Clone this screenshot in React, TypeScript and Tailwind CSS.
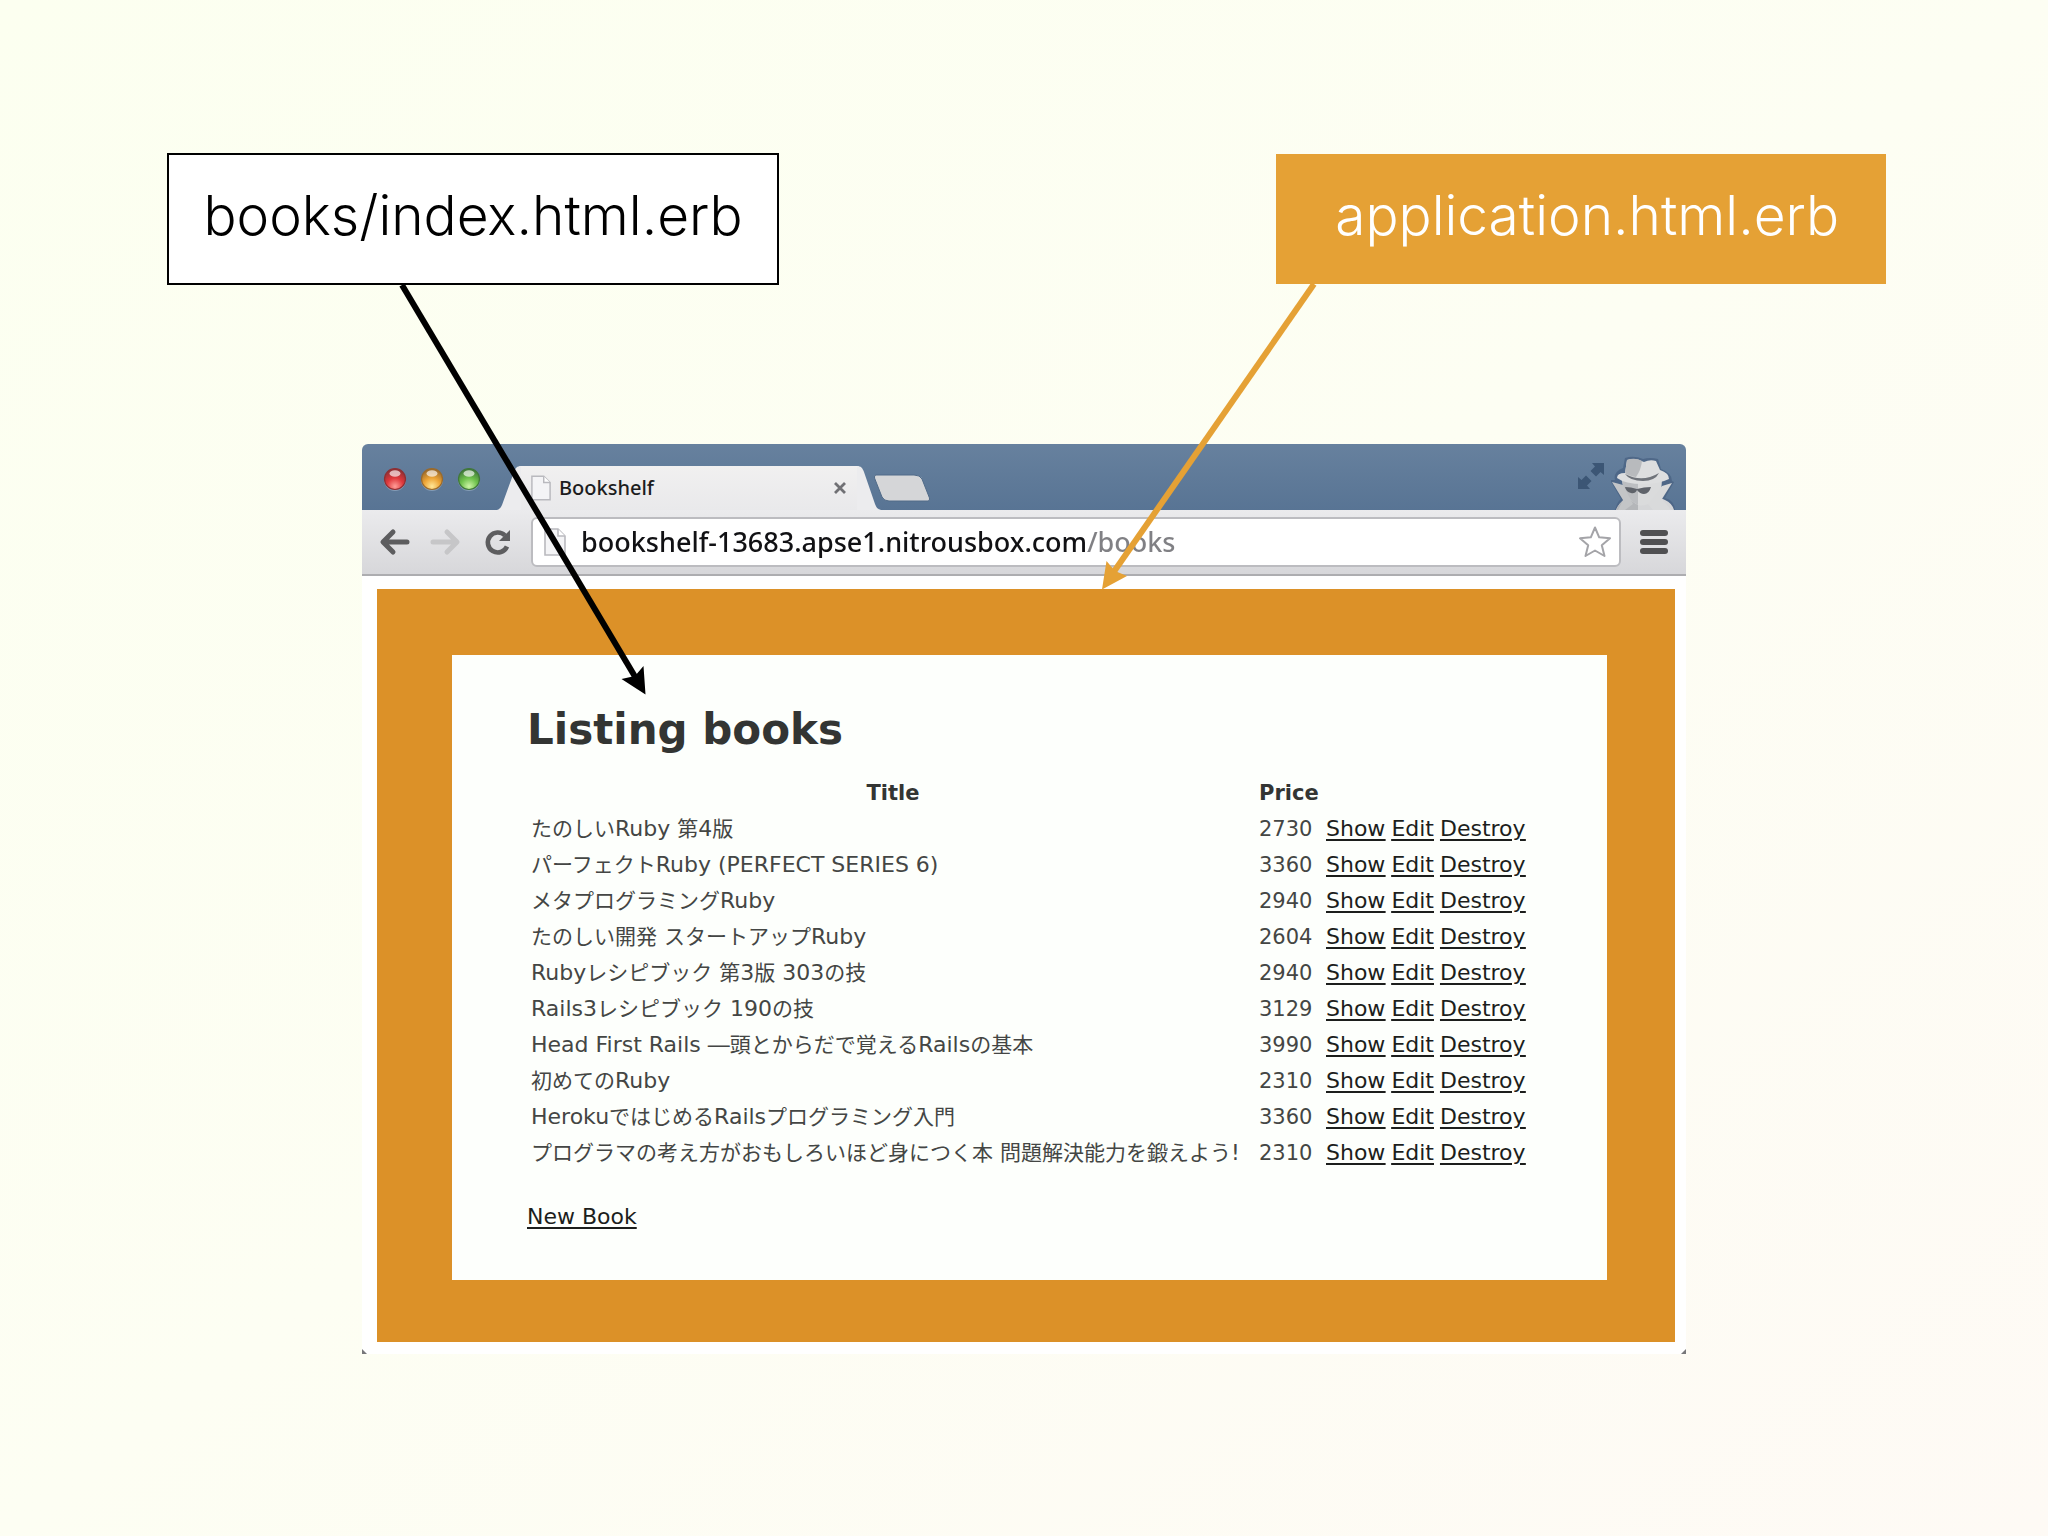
import React from 'react';

type Book = { title: string; price: number };

const books: Book[] = [
  { title: 'たのしいRuby 第4版', price: 2730 },
  { title: 'パーフェクトRuby (PERFECT SERIES 6)', price: 3360 },
  { title: 'メタプログラミングRuby', price: 2940 },
  { title: 'たのしい開発 スタートアップRuby', price: 2604 },
  { title: 'Rubyレシピブック 第3版 303の技', price: 2940 },
  { title: 'Rails3レシピブック 190の技', price: 3129 },
  { title: 'Head First Rails ―頭とからだで覚えるRailsの基本', price: 3990 },
  { title: '初めてのRuby', price: 2310 },
  { title: 'HerokuではじめるRailsプログラミング入門', price: 3360 },
  { title: 'プログラマの考え方がおもしろいほど身につく本 問題解決能力を鍛えよう!', price: 2310 },
];

function PageIcon({ className }: { className: string }) {
  return (
    <svg viewBox="0 0 22 28" className={className} aria-hidden="true">
      <path d="M1 1H14L21 8V27H1Z" fill="#f4f4f6" stroke="#b9b9be" strokeWidth="1.6" />
      <path d="M14 1V8H21" fill="#fff" stroke="#b9b9be" strokeWidth="1.6" />
    </svg>
  );
}

function Light({ label, id, edge, base, glow }: { label: string; id: string; edge: string; base: string; glow: string }) {
  return (
    <button aria-label={label} className="size-6">
      <svg viewBox="0 0 24 24" className="size-6">
        <defs>
          <radialGradient id={id} cx="50%" cy="85%" r="80%">
            <stop offset="0" stopColor={glow} />
            <stop offset="0.5" stopColor={base} />
            <stop offset="1" stopColor={edge} />
          </radialGradient>
        </defs>
        <circle cx="12" cy="13" r="11" fill="#9fb4cb" opacity="0.6" />
        <circle cx="12" cy="12" r="10.5" fill={`url(#${id})`} stroke={edge} strokeWidth="1.2" />
        <ellipse cx="12" cy="6.5" rx="5.5" ry="3.2" fill="#fff" opacity="0.65" />
      </svg>
    </button>
  );
}

function Incognito() {
  return (
    <svg viewBox="0 0 66 54" className="mr-[9px] ml-[6px] h-[54px] w-[66px]" aria-label="Incognito" role="img">
      <path
        d="M12 12L14 2Q23 -1 32 3Q39 1 47 3L50 13Q61 17 61 25L63 26L54 42Q63 44 64 54H4Q6 46 10 43L-1 24L4 24Q2 16 12 12Z"
        fill="#4a6383"
        opacity="0.8"
      />
      <path d="M5 54Q8 47 13 44Q20 40 30 40Q44 39 54 44Q61 47 63 54Z" fill="#d5d6d8" />
      <path d="M5 54Q8 47 13 44Q19 41 27 40V54Z" fill="#b4b6b9" />
      <path d="M11 24H51Q51 38 42 45Q34 51 27 49Q13 42 11 24Z" fill="#dadbdc" />
      <path d="M11 24H27V49Q13 42 11 24Z" fill="#bcbec1" />
      <path d="M14 17L16 4Q24 1 33 6Q39 3 45 5L49 14Q58 17 58 23Q48 28 32 28Q14 28 6 22Q6 17 14 17Z" fill="#dddedf" />
      <path d="M14 17L16 4Q24 1 31 5Q30 14 25 21Q18 20 14 17Z" fill="#b8babd" />
      <path d="M14 18Q31 27 48 17Q44 25 32 25Q19 25 14 18Z" fill="#6f737a" />
      <path d="M14 31Q20 31 26 33Q33 31 40 31Q38 38 33 38Q29 38 26 34Q24 38 20 37Q15 36 14 31Z" fill="#5f636a" />
      <path d="M1 26L12 29L22 48L14 54H7L12 44Z" fill="#c3c5c7" />
      <path d="M61 27L51 30L37 48L42 54H60L51 43Z" fill="#d9dadb" />
    </svg>
  );
}

function TitleBar() {
  return (
    <div className="flex h-[66px] items-end rounded-t-md bg-linear-to-b from-[#67819e] to-[#587494]">
      <div className="mb-[19px] ml-[21px] flex gap-[13px]">
        <Light label="Close window" id="red" edge="#8e2f33" base="#e0383c" glow="#ff9d97" />
        <Light label="Minimize window" id="amber" edge="#9a6a2c" base="#eda435" glow="#ffe697" />
        <Light label="Zoom window" id="green" edge="#40783a" base="#6fc24c" glow="#cdf5a6" />
      </div>
      <div className="ml-[16px] flex h-[44px]">
        <svg viewBox="0 0 24 44" className="h-[44px] w-6" aria-hidden="true">
          <path d="M0 44C3 43 4 41 5 39L17 6C18.500 2 20 0 24 0V44Z" fill="#ececee" />
        </svg>
        <div className="flex w-[336px] items-center bg-linear-to-b from-[#f1f0f0] to-[#e9e9eb] pl-[10px] pr-[11px]">
          <PageIcon className="h-[26px] w-5" />
          <span className="ml-[8px] flex-1 font-['Noto_Sans',sans-serif] text-[20px] leading-6 font-medium text-[#1c1c20]">
            Bookshelf
          </span>
          <button aria-label="Close tab" className="size-3">
            <svg viewBox="0 0 12 12" className="size-3">
              <path d="M1 1L11 11M11 1L1 11" stroke="#707074" strokeWidth="2.800" />
            </svg>
          </button>
        </div>
        <svg viewBox="0 0 24 44" className="h-[44px] w-6" aria-hidden="true">
          <path d="M0 0C4 0 5.500 2 7 6L18 38C19.500 42 21 43 24 44H0Z" fill="#ececee" />
        </svg>
      </div>
      <button aria-label="New tab" className="mb-[8px] -ml-[8px] h-7 w-[58px]">
        <svg viewBox="0 0 58 28" className="h-7 w-[58px]">
          <path
            d="M3 1H41Q47 1 49 5L56.500 24Q57 27 55 27H16Q11 27 9 23L1.500 4Q1 1 3 1Z"
            fill="#d5d6d8"
            stroke="#516b88"
            strokeWidth="1"
          />
        </svg>
      </button>
      <div className="flex-1" />
      <button aria-label="Full screen" className="mb-[20px] size-7">
        <svg viewBox="0 0 28 28" className="size-7" fill="#3c5675">
          <path d="M15 1H27V13L23.500 10L19 14.500L13.500 9L18 4.500Z" />
          <path d="M1 15L4.500 18L9 13.500L14.500 19L10 23.500L13 27H1Z" />
        </svg>
      </button>
      <Incognito />
    </div>
  );
}

function Toolbar() {
  return (
    <div className="flex h-[66px] items-center border-b-2 border-[#adadb0] bg-linear-to-b from-[#ebebed] to-[#d7d7da] pr-[18px] pl-[17px]">
      <button aria-label="Back" className="size-8">
        <svg viewBox="0 0 32 32" className="size-8" fill="none" stroke="#5d5d5f" strokeWidth="5" strokeLinecap="round">
          <path d="M5 16H28M14 6L4 16L14 26" strokeLinejoin="round" />
        </svg>
      </button>
      <button aria-label="Forward" className="ml-[18px] size-8">
        <svg viewBox="0 0 32 32" className="size-8" fill="none" stroke="#c6c6c8" strokeWidth="5" strokeLinecap="round">
          <path d="M4 16H27M18 6L28 16L18 26" strokeLinejoin="round" />
        </svg>
      </button>
      <button aria-label="Reload" className="ml-[21px] size-8">
        <svg viewBox="0 0 32 32" className="size-8">
          <path d="M23 9.500A10 10 0 1 0 25 20.500" fill="none" stroke="#5d5d5f" strokeWidth="4.600" />
          <path d="M28 4V15H17Z" fill="#5d5d5f" />
        </svg>
      </button>
      <form className="ml-[17px] flex h-[50px] flex-1 items-center rounded-md border-2 border-[#bcbcc0] bg-white pr-[7px] pl-[11px]">
        <PageIcon className="h-7 w-[22px]" />
        <input
          aria-label="Address"
          defaultValue="bookshelf-13683.apse1.nitrousbox.com/books"
          className="ml-[15px] min-w-0 flex-1 bg-[linear-gradient(90deg,#111114_507px,#808084_507px)] bg-clip-text font-['Noto_Sans',sans-serif] text-[27px] leading-8 font-medium text-transparent outline-none"
        />
        <button type="button" aria-label="Bookmark" className="size-[34px]">
          <svg viewBox="0 0 34 34" className="size-[34px]">
            <path
              d="M17 2.500L21.200 12.300L32 13.300L23.800 20.300L26.500 31L17 25.500L7.500 31L10.200 20.300L2 13.300L12.800 12.300Z"
              fill="#fff"
              stroke="#a4a4a8"
              strokeWidth="2"
              strokeLinejoin="round"
            />
          </svg>
        </button>
      </form>
      <button aria-label="Menu" className="ml-[19px] flex w-7 flex-col gap-[3px]">
        <span className="h-[6px] rounded-full bg-[#505052]" />
        <span className="h-[6px] rounded-full bg-[#505052]" />
        <span className="h-[6px] rounded-full bg-[#505052]" />
      </button>
    </div>
  );
}

/* Japanese glyphs look larger than Latin ones at the same size, so their runs are set one pixel smaller. */
function MixedText({ text }: { text: string }) {
  return (
    <>
      {text.split(/([\u3000-\u9fff]+)/).map((run, i) =>
        i % 2 === 1 ? (
          <span key={i} className="text-[21px]">
            {run}
          </span>
        ) : (
          run
        ),
      )}
    </>
  );
}

function BookTable() {
  return (
    <table className="mt-[20px] border-separate border-spacing-0 text-[21px] leading-9">
      <thead>
        <tr>
          <th className="px-[5px] text-center font-bold">Title</th>
          <th className="text-left font-bold">Price</th>
          <th aria-label="Actions" />
        </tr>
      </thead>
      <tbody>
        {books.map((book) => (
          <tr key={book.title} className="h-9">
            <td className="h-9 w-[732px] p-0 pl-[4px] text-[22px] leading-8 whitespace-nowrap text-[#444644]">
              <MixedText text={book.title} />
            </td>
            <td className="w-[67px] p-0 leading-8 text-[#444644]">{book.price}</td>
            <td className="p-0">
              <span className="flex gap-[6px] text-[22px] leading-8 text-[#1c1e1c] underline decoration-2 underline-offset-3">
                <a href="#show">Show</a>
                <a href="#edit">Edit</a>
                <a href="#destroy">Destroy</a>
              </span>
            </td>
          </tr>
        ))}
      </tbody>
    </table>
  );
}

function BrowserWindow() {
  return (
    <section className="relative mx-auto w-full max-w-[1324px]">
      <TitleBar />
      <Toolbar />
      <div className="bg-white pt-[13px] pr-[11px] pb-[12px] pl-[15px]">
        <div className="bg-[#dc9128] pt-[66px] pr-[68px] pb-[62px] pl-[75px]">
          <div className="bg-[#fdfffc] pt-[50px] pb-[45px] pl-[75px] font-['DejaVu_Sans','Noto_Sans_CJK_JP',sans-serif] text-[#333533]">
            <h1 className="text-[42px] leading-[50px] font-bold">Listing books</h1>
            <BookTable />
            <a href="#new" className="mt-[28px] inline-block text-[22px] leading-9 text-[#1c1e1c] underline decoration-2 underline-offset-3">
              New Book
            </a>
          </div>
        </div>
      </div>
      <svg viewBox="0 0 5 5" className="absolute bottom-0 left-0 size-[5px]" aria-hidden="true">
        <path d="M0 0L5 5H0Z" fill="#77777a" />
      </svg>
      <svg viewBox="0 0 5 5" className="absolute right-0 bottom-0 size-[5px]" aria-hidden="true">
        <path d="M5 0V5H0Z" fill="#77777a" />
      </svg>
    </section>
  );
}

function Arrows() {
  return (
    <svg viewBox="0 0 2048 1536" className="pointer-events-none absolute inset-x-0 top-0 w-full" aria-hidden="true">
      <path d="M402 285L637 680" stroke="#000" strokeWidth="6" />
      <path d="M645.500 694.500L621.500 679L635 676L643.500 666Z" fill="#000" />
      <path d="M1314 284L1113 573" stroke="#e5a135" strokeWidth="6" />
      <path d="M1102 589.500L1106.500 561L1115 571L1127 576Z" fill="#e5a135" />
    </svg>
  );
}

export default function App() {
  return (
    <main className="relative min-h-screen bg-linear-to-br from-[#fcfff0] via-[#fdfef3] to-[#fefaf5] pt-[153px] pb-[181px]">
      <div className="flex items-center justify-between gap-8 pr-[162px] pl-[167px] font-['Inter',sans-serif] text-[55px] leading-[80px] font-light">
        <div className="flex h-[132px] w-[612px] items-center justify-center border-2 border-black bg-white pb-[8px] text-black">
          books/index.html.erb
        </div>
        <div className="flex h-[130px] w-[610px] items-center justify-end bg-[#e5a135] pr-[47px] pb-[8px] text-white">
          application.html.erb
        </div>
      </div>
      <div className="mt-[159px] px-6">
        <BrowserWindow />
      </div>
      <Arrows />
    </main>
  );
}
